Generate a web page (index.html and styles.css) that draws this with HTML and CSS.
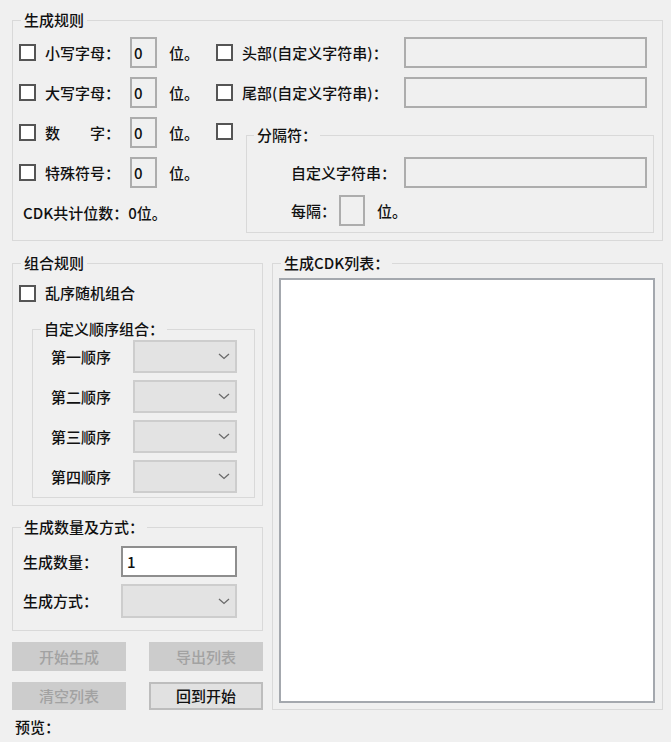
FILE: index.html
```html
<!DOCTYPE html>
<html lang="zh-CN">
<head>
<meta charset="utf-8">
<title>CDK生成器</title>
<link rel="stylesheet" href="styles.css">
</head>
<body>
<div class="window">
  <div class="group top-group">
    <div class="group-title">生成规则</div>
    <div class="top-body">
      <div class="top-left">
        <div class="row"><span class="cb"></span><span class="lbl-num">小写字母：</span><span class="num">0</span><span class="unit">位。</span></div>
        <div class="row"><span class="cb"></span><span class="lbl-num">大写字母：</span><span class="num">0</span><span class="unit">位。</span></div>
        <div class="row"><span class="cb"></span><span class="lbl-num">数&emsp;&emsp;字：</span><span class="num">0</span><span class="unit">位。</span></div>
        <div class="row"><span class="cb"></span><span class="lbl-num">特殊符号：</span><span class="num">0</span><span class="unit">位。</span></div>
        <div class="row total">CDK共计位数：0位。</div>
      </div>
      <div class="top-right">
        <div class="row"><span class="cb"></span><span class="lbl-str">头部(自定义字符串)：</span><span class="txt"></span></div>
        <div class="row"><span class="cb"></span><span class="lbl-str">尾部(自定义字符串)：</span><span class="txt"></span></div>
        <div class="sep-row">
          <span class="cb sep-cb"></span>
          <div class="group sep-group">
            <div class="group-title">分隔符：</div>
            <div class="row sep-first"><span class="lbl-custom">自定义字符串：</span><span class="txt"></span></div>
            <div class="row sep-second"><span class="lbl-every">每隔：</span><span class="num"></span><span class="unit">位。</span></div>
          </div>
        </div>
      </div>
    </div>
  </div>

  <div class="bottom">
    <div class="left-col">
      <div class="group combo-group">
        <div class="group-title">组合规则</div>
        <div class="rand-row"><span class="cb"></span><span class="rand-lbl">乱序随机组合</span></div>
        <div class="group order-group">
          <div class="group-title">自定义顺序组合：</div>
          <div class="order-list">
            <div class="order-row"><span class="order-lbl">第一顺序</span><span class="combo"><svg class="chev" width="12" height="7" viewBox="0 0 12 7"><polyline points="1,1 6,5.5 11,1" fill="none" stroke="#6a6a6a" stroke-width="1.3"/></svg></span></div>
            <div class="order-row"><span class="order-lbl">第二顺序</span><span class="combo"><svg class="chev" width="12" height="7" viewBox="0 0 12 7"><polyline points="1,1 6,5.5 11,1" fill="none" stroke="#6a6a6a" stroke-width="1.3"/></svg></span></div>
            <div class="order-row"><span class="order-lbl">第三顺序</span><span class="combo"><svg class="chev" width="12" height="7" viewBox="0 0 12 7"><polyline points="1,1 6,5.5 11,1" fill="none" stroke="#6a6a6a" stroke-width="1.3"/></svg></span></div>
            <div class="order-row"><span class="order-lbl">第四顺序</span><span class="combo"><svg class="chev" width="12" height="7" viewBox="0 0 12 7"><polyline points="1,1 6,5.5 11,1" fill="none" stroke="#6a6a6a" stroke-width="1.3"/></svg></span></div>
          </div>
        </div>
      </div>

      <div class="group qty-group">
        <div class="group-title">生成数量及方式：</div>
        <div class="qty-row first"><span class="qty-lbl">生成数量：</span><span class="qty-input">1</span></div>
        <div class="qty-row second"><span class="qty-lbl">生成方式：</span><span class="combo combo-tall"><svg class="chev" width="12" height="7" viewBox="0 0 12 7"><polyline points="1,1 6,5.5 11,1" fill="none" stroke="#6a6a6a" stroke-width="1.3"/></svg></span></div>
      </div>

      <div class="btn-row first">
        <span class="btn disabled">开始生成</span>
        <span class="btn disabled">导出列表</span>
      </div>
      <div class="btn-row second">
        <span class="btn disabled">清空列表</span>
        <span class="btn enabled">回到开始</span>
      </div>
      <div class="preview">预览：</div>
    </div>

    <div class="right-col">
      <div class="group list-group">
        <div class="group-title">生成CDK列表：</div>
        <div class="cdk-list"></div>
      </div>
    </div>
  </div>
</div>
</body>
</html>
```

FILE: styles.css
```css
* { box-sizing: border-box; }

html, body {
  margin: 0;
  padding: 0;
  background: #f0f0f0;
}

body {
  width: 671px;
  height: 742px;
  overflow: hidden;
  font-family: "Noto Sans CJK SC", "Noto Sans", sans-serif;
  font-size: 15px;
  font-weight: 500;
  line-height: 20px;
  color: #111;
}

.window {
  padding: 20px 0 0 12px;
}

.group {
  border: 1px solid #d9d9d9;
}

.group-title {
  width: fit-content;
  margin: -11px 0 0 8px;
  padding: 0 3px;
  line-height: 20px;
  background: #f0f0f0;
  white-space: nowrap;
}

/* ---- top group ---- */
.top-group {
  width: 651px;
}

.top-body {
  display: flex;
  padding: 7px 8px 7px 6px;
}

.top-left {
  width: 197px;
  display: flex;
  flex-direction: column;
  gap: 9px;
}

.top-right {
  flex: 1;
  display: flex;
  flex-direction: column;
  gap: 9px;
}

.row {
  display: flex;
  align-items: center;
  height: 31px;
  white-space: nowrap;
}

.cb {
  flex: none;
  width: 17px;
  height: 17px;
  border: 2px solid #555;
  background: #fff;
  margin-right: 9px;
}

.lbl-num { width: 85px; }

.num {
  flex: none;
  width: 27px;
  height: 31px;
  border: 2px solid #adadad;
  padding-left: 2px;
  line-height: 27px;
}

.unit { margin-left: 12px; }

.total {
  padding-left: 4px;
}

.lbl-str { width: 162px; }

.txt {
  flex: none;
  width: 243px;
  height: 31px;
  border: 2px solid #adadad;
}

.sep-row {
  display: flex;
  align-items: flex-start;
}

.sep-cb {
  margin: 6px 0 0 0;
}

.sep-group {
  flex: 1;
  margin: 18px 0 0 13px;
  padding: 0 6px 6px 44px;
}

.sep-group > .group-title {
  margin-left: -37px;
}

.sep-first { margin-top: 12px; }
.sep-second { margin-top: 7px; }

.lbl-custom { width: 113px; }
.lbl-every { width: 48px; }
.sep-second .num { width: 26px; }

/* ---- bottom ---- */
.bottom {
  display: flex;
  align-items: flex-start;
  gap: 9px;
  margin-top: 22px;
}

.left-col {
  width: 251px;
  display: flex;
  flex-direction: column;
}

.right-col {
  width: 391px;
}

.combo-group {
  padding: 0 7px 7px 6px;
}

.combo-group > .group-title {
  margin-left: 2px;
}

.rand-row {
  display: flex;
  align-items: center;
  height: 20px;
  margin-top: 10px;
}

.order-group {
  margin: 26px 0 0 13px;
  padding: 0 17px 4px 18px;
}

.order-group > .group-title {
  margin-left: -10px;
}

.order-list {
  display: flex;
  flex-direction: column;
  gap: 7px;
  margin-top: 1px;
}

.order-row {
  display: flex;
  align-items: center;
}

.order-lbl { width: 82px; }

.combo {
  flex: none;
  width: 104px;
  height: 33px;
  background: #e3e3e3;
  border: 2px solid #cdcdcd;
  display: flex;
  align-items: center;
  justify-content: flex-end;
  padding-right: 5px;
}

.combo-tall { height: 34px; width: 116px; }

.chev { display: block; }

.qty-group {
  margin-top: 21px;
  padding: 0 24px 12px 10px;
}

.qty-group > .group-title {
  margin-left: -2px;
}

.qty-row {
  display: flex;
  align-items: center;
}

.qty-row.first { margin-top: 9px; }
.qty-row.second { margin-top: 7px; }

.qty-lbl { width: 98px; }

.qty-input {
  width: 116px;
  height: 31px;
  background: #fff;
  border: 2px solid #8e8e8e;
  padding-left: 4px;
  line-height: 27px;
}

.btn-row {
  display: flex;
  justify-content: space-between;
}

.btn-row.first { margin-top: 11px; }
.btn-row.first .btn { height: 29px; }
.btn-row.second { margin-top: 11px; }
.btn-row.second .btn { height: 28px; }

.btn {
  width: 114px;
  display: flex;
  align-items: center;
  justify-content: center;
}

.btn.disabled {
  background: #cccccc;
  color: #a2a2a2;
}

.btn.enabled {
  background: #e1e1e1;
  border: 2px solid #bdbdbd;
  color: #111;
}

.preview {
  margin: 7px 0 0 3px;
}

.list-group {
  padding: 0 7px 6px 6px;
}

.list-group > .group-title {
  margin-left: 2px;
}

.cdk-list {
  margin-top: 5px;
  height: 425px;
  background: #fff;
  border: 2px solid #a4a8ae;
}
```
